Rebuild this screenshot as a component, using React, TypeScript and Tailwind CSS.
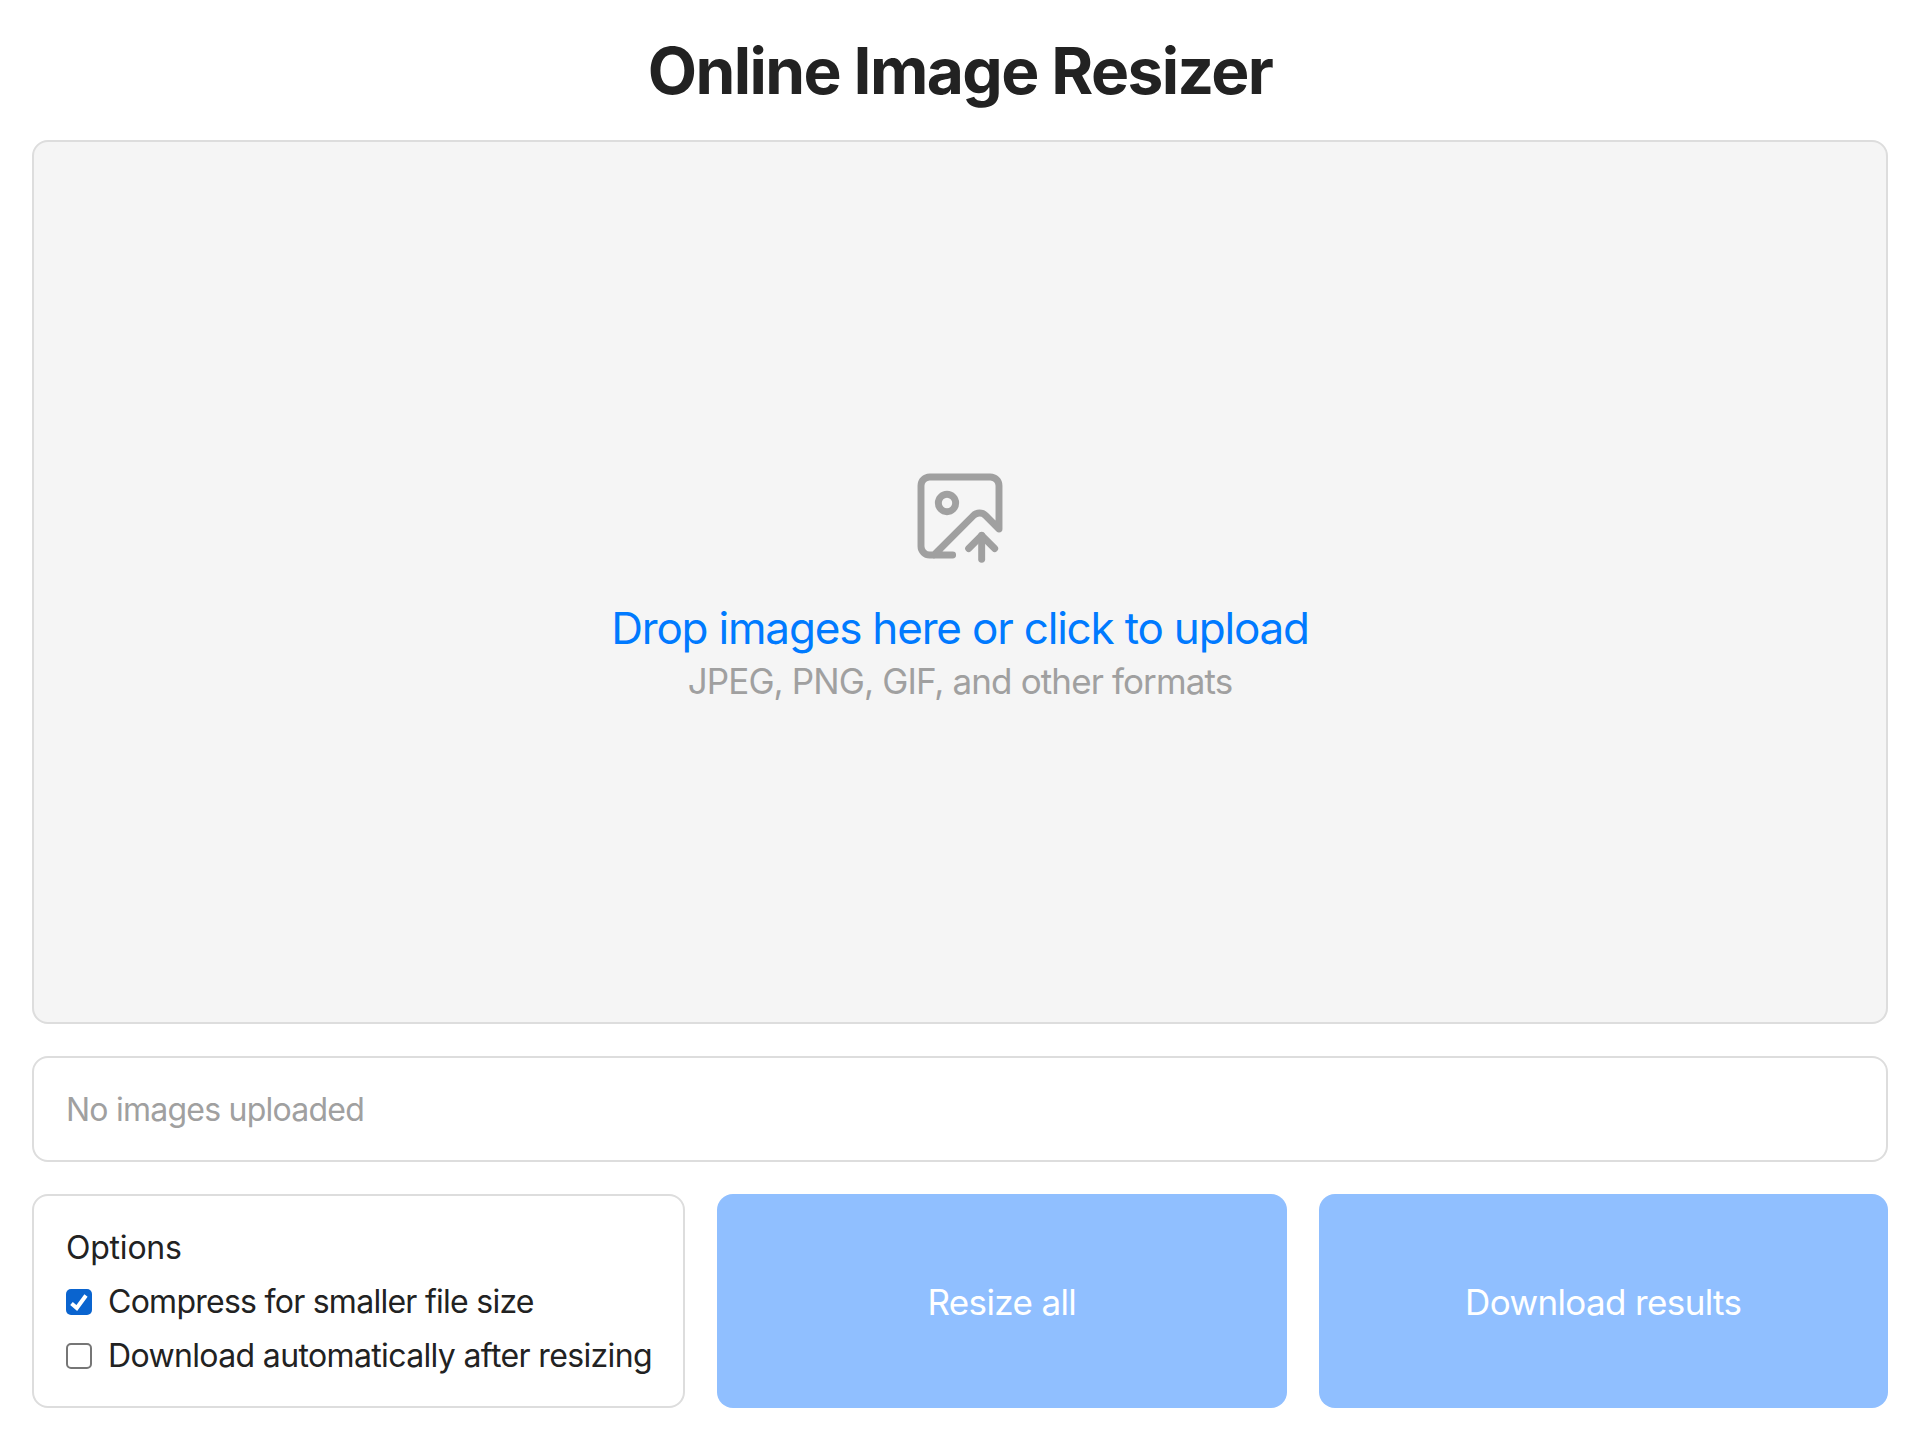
import { ImageUp } from 'lucide-react'

export default function App() {
  return (
    <div className="min-h-[1440px] bg-white font-['Inter',sans-serif] text-[#222]">
      <div className="flex flex-col gap-8 px-8 pt-8 pb-8">
        <h1 className="h-[76px] text-center text-[64px] leading-[78px] font-bold tracking-[-0.025em]">Online Image Resizer</h1>

        <div className="flex h-[884px] flex-col items-center justify-center rounded-2xl border-2 border-[#ddd] bg-[#f5f5f5] pt-[7px]">
          <ImageUp size={104} strokeWidth={1.6} className="text-[#a0a0a0]" />
          <p className="mt-[33px] text-[44px] leading-[54px] tracking-[-0.027em] text-[#007aff]">Drop images here or click to upload</p>
          <p className="text-[35px] leading-[52px] tracking-[-0.025em] text-[#a0a0a0]">JPEG, PNG, GIF, and other formats</p>
        </div>

        <div className="flex h-[106px] items-center rounded-2xl border-2 border-[#ddd] bg-white px-8 pt-[2px] text-[32px] tracking-[-0.024em] text-[#a0a0a0]">
          No images uploaded
        </div>

        <div className="flex h-[214px] gap-8">
          <div className="flex w-[653px] shrink-0 flex-col justify-center rounded-2xl border-2 border-[#ddd] px-8 pt-[2px] text-[32px] leading-[54px] tracking-[-0.023em] whitespace-nowrap">
            <div className="tracking-[-0.007em]">Options</div>
            <label className="flex items-center gap-4">
              <span className="flex h-[26px] w-[26px] shrink-0 items-center justify-center rounded-[5px] bg-[#0a64cf]">
                <svg viewBox="0 0 26 26" className="h-[26px] w-[26px]" fill="none" stroke="white" strokeWidth="4">
                  <path d="M5.5 14.5l5.3 4.5 9.2-12.5" />
                </svg>
              </span>
              Compress for smaller file size
            </label>
            <label className="flex items-center gap-4 tracking-[-0.02em]">
              <span className="h-[26px] w-[26px] shrink-0 rounded-[5px] border-2 border-[#767676] bg-white" />
              Download automatically after resizing
            </label>
          </div>
          <button className="flex-1 rounded-2xl bg-[#90bfff] pt-[2px] text-[35px] tracking-[-0.018em] text-white">Resize all</button>
          <button className="flex-1 rounded-2xl bg-[#90bfff] pt-[2px] text-[35px] tracking-[-0.018em] text-white">Download results</button>
        </div>
      </div>
    </div>
  )
}
